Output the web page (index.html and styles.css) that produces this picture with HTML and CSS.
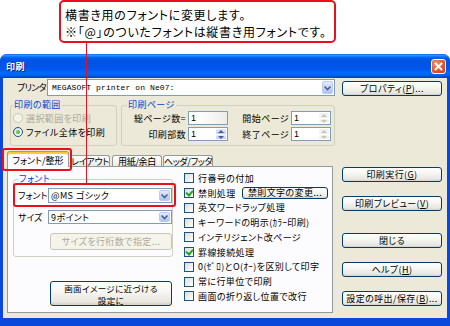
FILE: index.html
```html
<!DOCTYPE html>
<html lang="ja">
  <head>
    <meta charset="UTF-8" />
    <title>印刷</title>
    <link rel="stylesheet" href="styles.css">
  </head>
  <body>
    <div class="stage">
      <div class="callout">
        <p>横書き用のフォントに変更します。</p>
        <p>※「@」のついたフォントは縦書き用フォントです。</p>
      </div>

      <div class="window">
        <div class="titlebar">
          <span class="title">印刷</span>
          <span class="close">
            <svg width="15" height="15" viewBox="0 0 15 15">
              <path d="M4.5 4.5 L10.5 10.5 M10.5 4.5 L4.5 10.5" stroke="#fff" stroke-width="1.8" stroke-linecap="square" />
            </svg>
          </span>
        </div>

        <div class="client">
          <div class="main">
            <div class="printer-row">
              <span class="printer-label">プリンタ</span>
              <div class="combo wide">
                <span class="val mono">MEGASOFT printer on Ne07:</span>
                <span class="drop"><svg width="9" height="6" viewBox="0 0 9 6"><path d="M1.5 1.5 L4.5 4.5 L7.5 1.5" fill="none" stroke="#4d6185" stroke-width="1.6" /></svg></span>
              </div>
            </div>

            <div class="groups">
              <fieldset class="group range">
                <legend>印刷の範囲</legend>
                <div class="opt disabled"><span class="radio"></span>選択範囲を印刷</div>
                <div class="opt"><span class="radio on"></span>ファイル全体を印刷</div>
              </fieldset>
              <fieldset class="group pages">
                <legend>印刷ページ</legend>
                <div class="page-grid">
                  <span class="lbl">総ページ数=</span>
                  <div class="spin readonly"><span class="num">1</span></div>
                  <span class="lbl">開始ページ</span>
                  <div class="spin"><span class="num">1</span><span class="arrows off"><i class="up"></i><i class="dn"></i></span></div>
                  <span class="lbl">印刷部数</span>
                  <div class="spin"><span class="num">1</span><span class="arrows"><i class="up"></i><i class="dn"></i></span></div>
                  <span class="lbl">終了ページ</span>
                  <div class="spin"><span class="num">1</span><span class="arrows off"><i class="up"></i><i class="dn"></i></span></div>
                </div>
              </fieldset>
            </div>

            <div class="tabs">
              <div class="tab active t1">フォント/整形</div>
              <div class="tab t2">レイアウト</div>
              <div class="tab t3">用紙/余白</div>
              <div class="tab t4">ヘッダ/フッタ</div>
            </div>

            <div class="panel">
              <div class="panel-left">
                <fieldset class="group font">
                  <legend>フォント</legend>
                  <div class="font-row">
                    <span class="flabel">フォント</span>
                    <div class="combo">
                      <span class="val">@MS ゴシック</span>
                      <span class="drop"><svg width="9" height="6" viewBox="0 0 9 6"><path d="M1.5 1.5 L4.5 4.5 L7.5 1.5" fill="none" stroke="#4d6185" stroke-width="1.6" /></svg></span>
                    </div>
                  </div>
                  <div class="font-row size">
                    <span class="flabel">サイズ</span>
                    <div class="combo">
                      <span class="val">9ポイント</span>
                      <span class="drop"><svg width="9" height="6" viewBox="0 0 9 6"><path d="M1.5 1.5 L4.5 4.5 L7.5 1.5" fill="none" stroke="#4d6185" stroke-width="1.6" /></svg></span>
                    </div>
                  </div>
                  <button class="btn disabled grid-btn">サイズを行桁数で指定...</button>
                </fieldset>
                <button class="btn near-btn"><span>画面イメージに近づける</span><span>設定に</span></button>
              </div>

              <div class="checks">
                <div class="chk"><span class="cb"></span>行番号の付加</div>
                <div class="chk"><span class="cb on"></span>禁則処理<button class="btn kinsoku">禁則文字の変更...</button></div>
                <div class="chk"><span class="cb"></span>英文ワードラップ処理</div>
                <div class="chk"><span class="cb"></span>キーワードの明示(ｶﾗｰ印刷)</div>
                <div class="chk"><span class="cb"></span>インテリジェント改ページ</div>
                <div class="chk"><span class="cb on"></span>罫線接続処理</div>
                <div class="chk"><span class="cb"></span>0(ｾﾞﾛ)とO(ｵｰ)を区別して印字</div>
                <div class="chk"><span class="cb"></span>常に行単位で印刷</div>
                <div class="chk"><span class="cb"></span>画面の折り返し位置で改行</div>
              </div>
            </div>
          </div>

          <div class="side">
            <button class="btn b-prop">プロパティ(<u>P</u>)...</button>
            <button class="btn b-print">印刷実行(<u>G</u>)</button>
            <button class="btn b-prev">印刷プレビュー(<u>V</u>)</button>
            <button class="btn b-close">閉じる</button>
            <button class="btn b-help">ヘルプ(<u>H</u>)</button>
            <button class="btn b-save">設定の呼出/保存(<u>B</u>)...</button>
          </div>
        </div>
      </div>

      <!-- 注釈の赤枠と引き出し線 -->
      <div class="mark mark-tab"></div>
      <div class="mark mark-font"></div>
      <div class="leader"></div>
    </div>
  </body>
</html>
```

FILE: styles.css
```css
* {
  box-sizing: border-box;
}
body {
  margin: 0;
  width: 450px;
  height: 326px;
  overflow: hidden;
  background: #fff;
  font-family: "Noto Sans CJK JP", sans-serif;
}
.stage {
  position: relative;
  width: 450px;
  height: 326px;
}

/* 吹き出し */
.callout {
  margin-left: 59px;
  width: 277px;
  height: 43px;
  border: 2px solid #e8101a;
  border-radius: 5px;
  padding: 4px 0 0 4px;
  font-size: 12px;
  line-height: 17px;
  letter-spacing: 0.7px;
  font-feature-settings: "palt";
  color: #000;
}
.callout p {
  margin: 0;
  white-space: nowrap;
}

/* ウィンドウ */
.window {
  margin-top: 11px;
  width: 450px;
  background: #0a48dc;
  border-radius: 7px 7px 0 0;
  border-bottom: 8px solid #0a48dc;
  font-size: 9px;
  font-feature-settings: "palt";
  letter-spacing: 0.4px;
  color: #000;
}
.titlebar {
  height: 24px;
  display: flex;
  align-items: center;
  justify-content: space-between;
  padding: 0 4px 0 6px;
  border-radius: 7px 7px 0 0;
  background: linear-gradient(#0058ee 0%, #3593ff 4%, #288eff 8%, #036ffc 12%, #0262ee 16%, #0057e5 22%, #0054e3 28%, #0055eb 56%, #005bf5 68%, #026afe 78%, #0062ef 88%, #0052d6 94%, #0040ab 100%);
}
.title {
  color: #fff;
  font-weight: bold;
  font-size: 9px;
  text-shadow: 1px 1px 0 #0a1e80;
}
.close {
  width: 15px;
  height: 15px;
  border: 1px solid #fff;
  border-radius: 3px;
  background: radial-gradient(circle at 35% 30%, #f09a7e, #e0562f 55%, #c8391b);
  display: flex;
}
.close svg {
  margin: -1px;
}

.client {
  display: flex;
  gap: 7px;
  margin: 0 3px;
  height: 240px;
  padding: 0 5px 0 4px;
  background: #ece9d8;
}
.main {
  width: 328px;
  flex: none;
}
.side {
  width: 100px;
  flex: none;
  display: flex;
  flex-direction: column;
}

/* プリンタ */
.printer-row {
  display: flex;
  align-items: center;
  height: 17px;
  margin-top: 1px;
}
.printer-label {
  margin-left: 10px;
  width: 30px;
  white-space: nowrap;
  letter-spacing: -0.7px;
}
.combo {
  display: flex;
  align-items: stretch;
  height: 15px;
  width: 124px;
  border: 1px solid #7f9db9;
  background: #fff;
  padding-left: 2px;
}
.combo.wide {
  width: 288px;
  height: 17px;
}
.combo .val {
  flex: 1;
  display: flex;
  align-items: center;
  white-space: nowrap;
  overflow: hidden;
}
.mono {
  font-family: "Liberation Mono", monospace;
  font-size: 8px;
  letter-spacing: 0.1px;
  padding-left: 2px;
}
.drop {
  width: 11px;
  margin: 1px;
  border-radius: 2px;
  border: 1px solid #b9cbf6;
  background: linear-gradient(#e3ebfe, #c3d4fb 55%, #adc4f7);
  display: flex;
  align-items: center;
  justify-content: center;
}

/* グループ */
.groups {
  display: flex;
  margin-top: 4px;
}
.group {
  margin: 0;
  min-width: 0;
  border: 1px solid #d0d0bf;
  border-radius: 3px;
}
.group legend {
  color: #0046d5;
  line-height: 10px;
  padding: 0 1px;
}
.range {
  margin-left: 3px;
  width: 107px;
  padding: 1px 2px 4px 2px;
}
.opt {
  display: flex;
  align-items: center;
  gap: 3px;
  height: 14px;
  white-space: nowrap;
}
.opt.disabled {
  color: #aca899;
}
.radio {
  width: 10px;
  height: 10px;
  border-radius: 50%;
  border: 1px solid #1c5180;
  background: linear-gradient(135deg, #dcdcd7, #fff);
  position: relative;
}
.opt.disabled .radio {
  border-color: #cac8bb;
  background: #f5f4ea;
}
.radio.on::after {
  content: "";
  position: absolute;
  left: 2px;
  top: 2px;
  width: 4px;
  height: 4px;
  border-radius: 50%;
  background: radial-gradient(circle at 35% 35%, #6ee26e, #21a121);
}
.pages {
  margin-left: 4px;
  width: 214px;
  padding: 1px 3px 4px 0;
}
.pages legend {
  margin-left: 5px;
}
.page-grid {
  display: grid;
  grid-template-columns: 64px 40px 59px 40px;
  grid-auto-rows: 14px;
  column-gap: 2px;
  row-gap: 2px;
}
.lbl {
  text-align: right;
  align-self: center;
  white-space: nowrap;
}
.spin {
  display: flex;
  border: 1px solid #7f9db9;
  background: #fff;
}
.spin.readonly {
  background: linear-gradient(90deg, #fff 25%, #ecece8);
}
.spin .num {
  flex: 1;
  padding-left: 2px;
  display: flex;
  align-items: center;
  font-family: "Liberation Sans", sans-serif;
}
.arrows {
  width: 10px;
  margin: 1px;
  display: flex;
  flex-direction: column;
  gap: 1px;
}
.arrows i {
  flex: 1;
  border-radius: 1px;
  background: linear-gradient(#e3ebfe, #b9cdf9);
  position: relative;
}
.arrows.off i {
  background: #f3f3ee;
}
.arrows i::after {
  content: "";
  position: absolute;
  left: 2px;
  border-left: 3px solid transparent;
  border-right: 3px solid transparent;
}
.arrows .up::after {
  top: 1px;
  border-bottom: 3px solid #4d6185;
}
.arrows .dn::after {
  top: 1px;
  border-top: 3px solid #4d6185;
}
.arrows.off .up::after {
  border-bottom-color: #c9c7ba;
}
.arrows.off .dn::after {
  border-top-color: #c9c7ba;
}

/* タブ */
.tabs {
  display: flex;
  align-items: flex-end;
  height: 15px;
  margin-top: 5px;
}
.tab {
  height: 11px;
  border: 1px solid #919b9c;
  border-bottom: none;
  border-radius: 3px 3px 0 0;
  background: linear-gradient(#fff, #ecebe6);
  display: flex;
  align-items: center;
  justify-content: center;
  white-space: nowrap;
  letter-spacing: -0.3px;
}
.tab.active {
  height: 16px;
  margin-bottom: -1px;
  position: relative;
  z-index: 1;
  background: #fcfcfe;
  border-top: 1px solid #e68b2c;
  box-shadow: inset 0 2px 0 #ffc83c;
  padding-top: 1px;
  letter-spacing: 0;
}
.t1 { width: 62px; }
.t2 { width: 40px; margin-left: 1px; }
.t3 { width: 50px; margin-left: 2px; }
.t4 { width: 50px; margin-left: 1px; }

.panel {
  width: 326px;
  height: 147px;
  border: 1px solid #919b9c;
  background: #fcfcfe;
  display: flex;
}
.panel-left {
  margin-left: 5px;
  width: 160px;
  display: flex;
  flex-direction: column;
}
.font {
  margin-top: 7px;
  padding: 4px 0 6px 4px;
}
.font-row {
  display: flex;
  align-items: center;
}
.font-row.size {
  margin-top: 7px;
}
.font-row.size .combo {
  height: 14px;
}
.flabel {
  width: 30px;
  white-space: nowrap;
  letter-spacing: 0;
}

/* ボタン */
.btn {
  font-family: inherit;
  font-size: 9px;
  letter-spacing: 0.4px;
  font-feature-settings: "palt";
  color: #000;
  height: 15px;
  padding: 0;
  border: 1px solid #003c74;
  border-radius: 3px;
  background: linear-gradient(#fff, #f5f5f1 45%, #e8e7e0 85%, #d6d0c5);
  display: flex;
  align-items: center;
  justify-content: center;
  white-space: nowrap;
  line-height: 10px;
}
.btn.disabled {
  border-color: #c9c7ba;
  color: #aca899;
  background: #f5f4ea;
}
.grid-btn {
  margin: 9px 0 0 32px;
  width: 122px;
  height: 17px;
}
.near-btn {
  margin: 24px 0 0 37px;
  width: 122px;
  height: 25px;
  flex-direction: column;
  font-size: 8.5px;
  line-height: normal;
}
.near-btn span {
  display: block;
}
.kinsoku {
  margin-left: auto;
  width: 86px;
  height: 12px;
}

/* チェックボックス */
.checks {
  margin-left: 11px;
  width: 144px;
  padding-top: 4px;
}
.chk {
  display: flex;
  align-items: center;
  gap: 4px;
  height: 14.75px;
  white-space: nowrap;
}
.cb {
  flex: none;
  width: 10px;
  height: 10px;
  border: 1px solid #1c5180;
  background: linear-gradient(135deg, #dcdcd7, #fff);
  position: relative;
}
.cb.on::after {
  content: "";
  position: absolute;
  left: 2px;
  top: 0px;
  width: 3px;
  height: 5px;
  border-right: 2px solid #21a121;
  border-bottom: 2px solid #21a121;
  transform: rotate(40deg);
}

/* 右側のボタン */
.side .btn {
  width: 100px;
}
.b-prop { margin-top: 3px; }
.b-print { margin-top: 71px; }
.b-prev { margin-top: 14px; }
.b-close { margin-top: 22px; }
.b-help { margin-top: 14px; }
.b-save { margin-top: 14px; }

/* 注釈 */
.mark {
  position: absolute;
  border: 2px solid #e8101a;
  border-radius: 3px;
}
.mark-tab {
  left: 2px;
  top: 148px;
  width: 70px;
  height: 23px;
}
.mark-font {
  left: 13px;
  top: 183px;
  width: 163px;
  height: 24px;
}
.leader {
  position: absolute;
  left: 86px;
  top: 42px;
  width: 1px;
  height: 141px;
  background: #e8101a;
}
```
